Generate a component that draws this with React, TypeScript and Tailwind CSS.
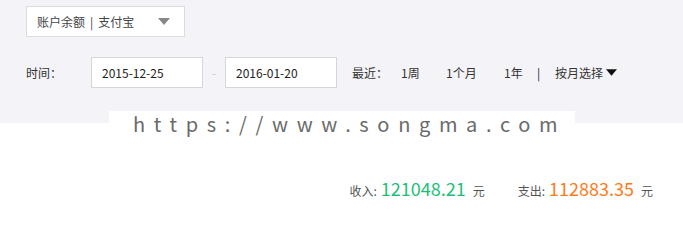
import React from 'react'

const font = { fontFamily: '"Noto Sans CJK SC", "Noto Sans", sans-serif' }

const Caret = ({ className }: { className: string }) => (
    <svg viewBox="0 0 12 7" className={className}>
        <path d="M0 0 L12 0 L6 7 Z" fill="currentColor" />
    </svg>
)

export default function App() {
    return (
        <div className="relative w-[683px] h-[247px] bg-white text-[12px] text-[#333]" style={font}>
            {/* Filters */}
            <div className="h-[123px] bg-[#f4f4f8] pl-[26px] pt-[6px]">
                <div className="flex items-center justify-between w-[159px] h-[31px] bg-white border border-[#dcdcdc] pl-[10px] pr-[14px]">
                    <span className="text-[#444]">
                        账户余额<span className="mx-[5px]">|</span>支付宝
                    </span>
                    <Caret className="w-[12px] h-[7px] text-[#888]" />
                </div>

                <div className="flex items-center h-[31px] mt-[20px]">
                    <span className="w-[65px]">时间：</span>
                    <div className="flex items-center w-[112px] h-[31px] bg-white border border-[#d6d6d6] pl-[10px] text-[#222]">2015-12-25</div>
                    <span className="w-[22px] text-center text-[#ccc]">-</span>
                    <div className="flex items-center w-[112px] h-[31px] bg-white border border-[#d6d6d6] pl-[10px] text-[#222]">2016-01-20</div>
                    <span className="ml-[15px] w-[49px]">最近：</span>
                    <span className="w-[45px]">1周</span>
                    <span className="w-[58px]">1个月</span>
                    <span className="w-[33px]">1年</span>
                    <span className="w-[18px] text-[#223]">|</span>
                    <span className="flex items-center gap-[3px]">
                        按月选择
                        <Caret className="w-[11px] h-[7px] text-[#111]" />
                    </span>
                </div>
            </div>

            {/* Totals */}
            <div className="flex items-baseline justify-end pr-[30px] mt-[52px]">
                <span className="text-[#555]">收入:</span>
                <span className="ml-[4px] text-[18px] text-[#1dbf78]">121048.21</span>
                <span className="ml-[7px] text-[#555]">元</span>
                <span className="ml-[33px] text-[#555]">支出:</span>
                <span className="ml-[4px] text-[18px] text-[#ff7b1a]">112883.35</span>
                <span className="ml-[7px] text-[#555]">元</span>
            </div>

            {/* Watermark */}
            <div
                className="absolute left-[109px] top-[111px] w-[466px] h-[26px] bg-white flex items-center pl-[24px] text-[20px] tracking-[8.65px] text-[#6a6a6a] leading-none whitespace-nowrap"
                style={font}
            >
                https://www.songma.com
            </div>
        </div>
    )
}
